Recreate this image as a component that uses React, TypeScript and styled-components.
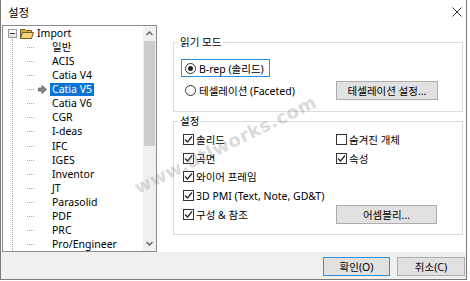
import React, { type ReactElement } from 'react'
import styled, { createGlobalStyle, css } from 'styled-components'

const GlobalStyle = createGlobalStyle`
  html, body {
    margin: 0;
    padding: 0;
    background: #fff;
  }
  body {
    font-family: "Noto Sans", "Noto Sans CJK KR", sans-serif;
    font-size: 10.5px;
    color: #000;
  }
  * {
    box-sizing: border-box;
  }
`

const Dialog = styled.div`
  position: relative;
  width: 467px;
  height: 280px;
  display: flex;
  flex-direction: column;
  background: #fff;
  border: 1px solid #7a7a7a;
  border-top: none;
  overflow: hidden;
`

const TitleBar = styled.div`
  height: 24px;
  flex: none;
  display: flex;
  align-items: center;
  justify-content: space-between;
  padding: 0 4px 0 7px;
  font-size: 11.5px;
`

const Body = styled.div`
  height: 228px;
  flex: none;
  display: flex;
`

const TreeBox = styled.div`
  margin: 1px 0 0 1px;
  width: 155px;
  height: 227px;
  display: flex;
  border: 1px solid #8c8c8c;
  background: #fff;
`

const TreeList = styled.div`
  flex: 1;
  overflow: hidden;
`

const Row = styled.div`
  height: 14.13px;
  display: flex;
  align-items: center;
  white-space: nowrap;
`

const Gutter = styled.div<{ $root?: boolean }>`
  width: 17px;
  align-self: stretch;
  flex: none;
  display: flex;
  align-items: center;
  background-image: repeating-linear-gradient(to bottom, #a8a8a8 0 1px, transparent 1px 2px);
  background-repeat: no-repeat;
  background-size: ${(p) => (p.$root ? '1px 50%' : '1px 100%')};
  background-position: ${(p) => (p.$root ? '9px 100%' : '9px 0')};
`

const Expander = styled.div`
  margin-left: 5px;
  width: 9px;
  height: 9px;
  border: 1px solid #9a9a9a;
  background: linear-gradient(#fff, #e2e2e2);
  display: flex;
  align-items: center;
  justify-content: center;

  &::after {
    content: '';
    width: 5px;
    height: 1px;
    background: #333;
  }
`

const Dash = styled.div`
  margin-left: 7px;
  width: 8px;
  height: 1px;
  flex: none;
  background-image: repeating-linear-gradient(to right, #a8a8a8 0 1px, transparent 1px 2px);
`

const MarkSlot = styled.div`
  width: 15px;
  flex: none;
  display: flex;
  align-items: center;
  padding-left: 3px;
`

const Label = styled.span<{ $selected?: boolean }>`
  padding: 0 2px;
  line-height: 13px;
  ${(p) =>
    p.$selected &&
    css`
      background: #0a74d6;
      color: #fff;
    `}
`

const RootLabel = styled.span`
  margin-left: 3px;
  line-height: 13px;
`

const ScrollBar = styled.div`
  width: 13px;
  flex: none;
  display: flex;
  flex-direction: column;
  background: #f0f0f0;
`

const ScrollArrow = styled.div`
  height: 15px;
  flex: none;
  display: flex;
  align-items: center;
  justify-content: center;
`

const Thumb = styled.div`
  height: 105px;
  margin: 0 1px;
  background: #cdcdcd;
`

const Track = styled.div`
  flex: 1;
`

const RightPane = styled.div`
  flex: 1;
  padding: 18px 3px 0 16px;
  display: flex;
  flex-direction: column;
`

const Group = styled.div<{ $height: number; $gap?: number }>`
  position: relative;
  height: ${(p) => p.$height}px;
  margin-top: ${(p) => p.$gap ?? 0}px;
  border: 1px solid #dcdcdc;
  flex: none;
`

const Legend = styled.span`
  position: absolute;
  top: -8px;
  left: 4px;
  padding: 0 2px;
  background: #fff;
  line-height: 14px;
`

const ModeBody = styled.div`
  padding: 16px 24px 0 7px;
  display: flex;
  flex-direction: column;
`

const FocusRow = styled.div`
  align-self: flex-start;
  height: 18px;
  display: flex;
  align-items: center;
  gap: 3px;
  padding: 0 5px 0 3px;
  border: 1px solid #2e8fe0;
`

const PlainRow = styled.div`
  margin-top: 4px;
  display: flex;
  align-items: center;
  justify-content: space-between;
  padding-left: 4px;
`

const Option = styled.label`
  display: flex;
  align-items: center;
  gap: 3px;
  white-space: nowrap;
`

const RadioDot = styled.span<{ $on?: boolean }>`
  width: 11px;
  height: 11px;
  border-radius: 50%;
  border: 1px solid #333;
  background: #fff;
  display: flex;
  align-items: center;
  justify-content: center;

  &::after {
    content: '';
    width: 5px;
    height: 5px;
    border-radius: 50%;
    background: ${(p) => (p.$on ? '#222' : 'transparent')};
  }
`

const SettingsGrid = styled.div`
  padding: 8px 0 0 9px;
  display: grid;
  grid-template-columns: 153px 101px;
  grid-auto-rows: 18.75px;
  align-items: center;
`

const Check = styled.label`
  display: flex;
  align-items: center;
  gap: 2px;
  white-space: nowrap;
`

const CheckBox = styled.span`
  width: 11px;
  height: 11px;
  flex: none;
  border: 1px solid #333;
  background: #fff;
  display: flex;
  align-items: center;
  justify-content: center;
`

const Button = styled.button<{ $width: number; $default?: boolean }>`
  width: ${(p) => p.$width}px;
  height: 19px;
  padding: 0;
  font: inherit;
  color: #000;
  background: #e1e1e1;
  border: 1px solid ${(p) => (p.$default ? '#2e8fe0' : '#adadad')};
`

const Footer = styled.div`
  height: 27px;
  flex: none;
  background: #f0f0f0;
  display: flex;
  justify-content: flex-end;
  align-items: flex-start;
  gap: 7px;
  padding: 5px 1px 0 0;
`

const Watermark = styled.div`
  position: absolute;
  left: 124px;
  top: 134px;
  transform: rotate(-26deg);
  font-family: "DejaVu Sans", sans-serif;
  font-size: 18px;
  font-weight: bold;
  letter-spacing: 0.5px;
  color: rgba(130, 130, 130, 0.3);
  pointer-events: none;
  white-space: nowrap;
`

const Tick = (): ReactElement => (
  <svg width="9" height="9" viewBox="0 0 9 9">
    <path d="M1 4.5 L3.5 7 L8 1.5" fill="none" stroke="#222" strokeWidth="1.2" />
  </svg>
)

const FolderIcon = (): ReactElement => (
  <svg width="14" height="11" viewBox="0 0 14 11">
    <path d="M0.5 1.5 H5 L6 2.5 H11.5 V10.5 H0.5 Z" fill="#d9b24a" stroke="#6e5a22" />
    <path d="M2.5 4.5 H13.5 L11.5 10.5 H0.5 Z" fill="#f3d67a" stroke="#6e5a22" />
  </svg>
)

const PointerIcon = (): ReactElement => (
  <svg width="9" height="9" viewBox="0 0 9 9">
    <path d="M0.5 3 H4 V0.5 L8.5 4.5 L4 8.5 V6 H0.5 Z" fill="#8a8a8a" stroke="#5a5a5a" strokeWidth="0.8" />
  </svg>
)

const Chevron = ({ up }: { up?: boolean }): ReactElement => (
  <svg width="7" height="5" viewBox="0 0 7 5">
    <path d={up ? 'M0.5 4 L3.5 1 L6.5 4' : 'M0.5 1 L3.5 4 L6.5 1'} fill="none" stroke="#606060" strokeWidth="1.3" />
  </svg>
)

const CloseIcon = (): ReactElement => (
  <svg width="10" height="10" viewBox="0 0 10 10">
    <path d="M0.5 0.5 L9.5 9.5 M9.5 0.5 L0.5 9.5" stroke="#333" strokeWidth="1" />
  </svg>
)

const formats = [
  '일반', 'ACIS', 'Catia V4', 'Catia V5', 'Catia V6', 'CGR', 'I-deas', 'IFC',
  'IGES', 'Inventor', 'JT', 'Parasolid', 'PDF', 'PRC', 'Pro/Engineer',
]

const SELECTED = 'Catia V5'

export default function App(): ReactElement {
  return (
    <>
      <GlobalStyle />
      <Dialog>
        <TitleBar>
          <span>설정</span>
          <CloseIcon />
        </TitleBar>

        <Body>
          <TreeBox>
            <TreeList>
              <Row>
                <Gutter $root>
                  <Expander />
                </Gutter>
                <FolderIcon />
                <RootLabel>Import</RootLabel>
              </Row>
              {formats.map((name) => (
                <Row key={name}>
                  <Gutter />
                  <Dash />
                  <MarkSlot>{name === SELECTED && <PointerIcon />}</MarkSlot>
                  <Label $selected={name === SELECTED}>{name}</Label>
                </Row>
              ))}
            </TreeList>
            <ScrollBar>
              <ScrollArrow>
                <Chevron up />
              </ScrollArrow>
              <Thumb />
              <Track />
              <ScrollArrow>
                <Chevron />
              </ScrollArrow>
            </ScrollBar>
          </TreeBox>

          <RightPane>
            <Group $height={70}>
              <Legend>읽기 모드</Legend>
              <ModeBody>
                <FocusRow>
                  <RadioDot $on />
                  <span>B-rep (솔리드)</span>
                </FocusRow>
                <PlainRow>
                  <Option>
                    <RadioDot />
                    <span>테셀레이션 (Faceted)</span>
                  </Option>
                  <Button $width={102}>테셀레이션 설정...</Button>
                </PlainRow>
              </ModeBody>
            </Group>

            <Group $height={114} $gap={9}>
              <Legend>설정</Legend>
              <SettingsGrid>
                <Check><CheckBox><Tick /></CheckBox>솔리드</Check>
                <Check><CheckBox />숨겨진 개체</Check>
                <Check><CheckBox><Tick /></CheckBox>곡면</Check>
                <Check><CheckBox><Tick /></CheckBox>속성</Check>
                <Check><CheckBox><Tick /></CheckBox>와이어 프레임</Check>
                <span />
                <Check><CheckBox><Tick /></CheckBox>3D PMI (Text, Note, GD&amp;T)</Check>
                <span />
                <Check><CheckBox><Tick /></CheckBox>구성 &amp; 참조</Check>
                <Button $width={101}>어셈블리...</Button>
              </SettingsGrid>
            </Group>
          </RightPane>
        </Body>

        <Footer>
          <Button $width={67} $default>확인(O)</Button>
          <Button $width={68}>취소(C)</Button>
        </Footer>

        <Watermark>www.dtlworks.com</Watermark>
      </Dialog>
    </>
  )
}
